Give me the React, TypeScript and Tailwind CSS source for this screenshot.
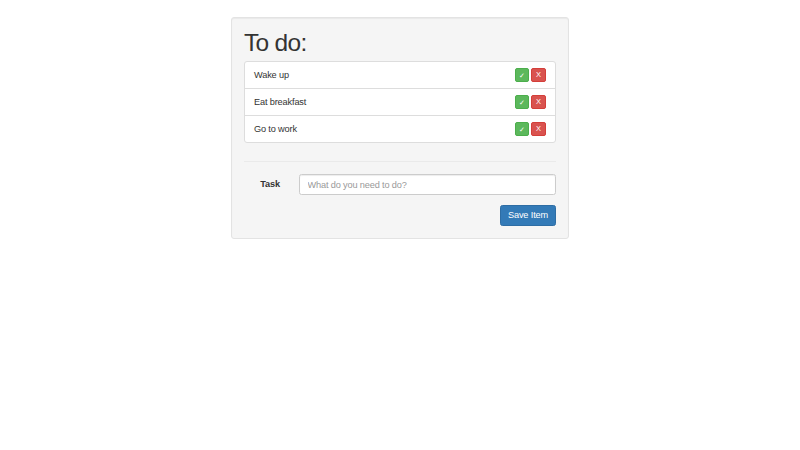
import { useState } from "react";

const initialItems = ["Wake up", "Eat breakfast", "Go to work"];

export default function App() {
  const [items, setItems] = useState(initialItems);
  const [task, setTask] = useState("");

  const remove = (i: number) => setItems(items.filter((_, idx) => idx !== i));

  const save = (e: React.FormEvent) => {
    e.preventDefault();
    if (!task.trim()) return;
    setItems([...items, task.trim()]);
    setTask("");
  };

  return (
    <div className="min-h-[450px] w-full bg-white pt-[17px] font-['Liberation_Sans',Arial,sans-serif] text-[#333]">
      <div className="mx-auto w-[338px] rounded-[3px] border border-[#e3e3e3] bg-[#f5f5f5] p-[12px] shadow-[inset_0_1px_1px_rgba(0,0,0,0.05)]">
        <h1 className="mb-[5.5px] text-[24.5px] leading-[25.5px] font-medium tracking-[-0.7px] text-[#333]">To do:</h1>

        <ul className="rounded-[3px] border border-[#ddd] bg-white">
          {items.map((item, i) => (
            <li
              key={i}
              className="flex items-center justify-between border-t border-[#ddd] py-[6px] pr-[9px] pl-[9px] first:border-t-0"
            >
              <span className="text-[9.2px] leading-[14px] tracking-[-0.15px]">{item}</span>
              <span className="flex gap-[2px]">
                <button className="flex h-[14px] w-[14px] items-center justify-center rounded-[2px] border border-[#4cae4c] bg-[#5cb85c] text-[7px] leading-none text-white">
                  ✓
                </button>
                <button
                  onClick={() => remove(i)}
                  className="flex h-[14px] w-[15px] items-center justify-center rounded-[2px] border border-[#d43f3a] bg-[#d9534f] text-[7.5px] leading-none text-white"
                >
                  X
                </button>
              </span>
            </li>
          ))}
        </ul>

        <hr className="mt-[18px] mb-[12px] border-t border-[#eaeaea]" />

        <form onSubmit={save}>
          <div className="flex items-center gap-[19px]">
            <label className="w-[36px] text-right text-[9.2px] font-bold tracking-[-0.15px]">Task</label>
            <input
              value={task}
              onChange={(e) => setTask(e.target.value)}
              placeholder="What do you need to do?"
              className="h-[21px] flex-1 rounded-[2.5px] border border-[#ccc] bg-white px-[7.5px] text-[9.2px] tracking-[-0.15px] text-[#555] shadow-[inset_0_1px_1px_rgba(0,0,0,0.075)] outline-none placeholder:text-[#999]"
            />
          </div>
          <div className="mt-[10px] flex justify-end">
            <button
              type="submit"
              className="h-[21px] rounded-[2.5px] border border-[#2e6da4] bg-[#337ab7] px-[7px] text-[9.2px] tracking-[-0.15px] text-white"
            >
              Save Item
            </button>
          </div>
        </form>
      </div>
    </div>
  );
}
